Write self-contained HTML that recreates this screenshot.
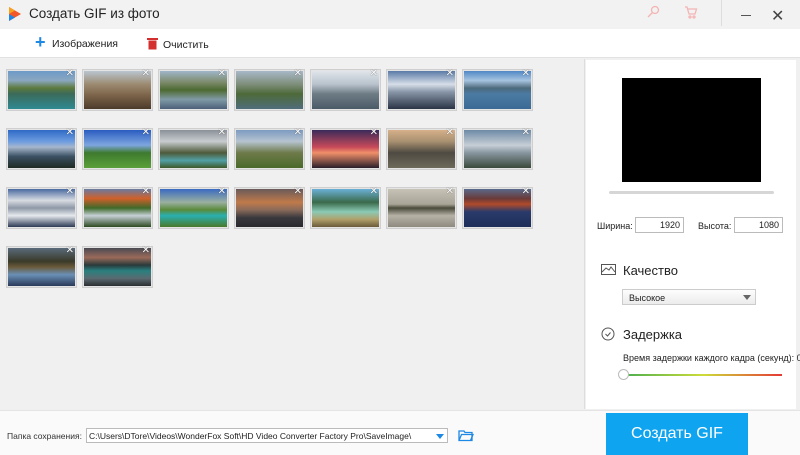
<!DOCTYPE html>
<html><head><meta charset="utf-8"><style>
*{box-sizing:border-box;margin:0;padding:0}
body{width:800px;height:455px;overflow:hidden;background:#f0f0f0;font-family:"Liberation Sans",sans-serif;position:relative;color:#222}
.a{position:absolute}
.t{position:absolute;width:71px;height:42px;border:1px solid #cfcfcf;padding:1px;background:#e4e4e4}
.t div{width:100%;height:100%}
.t span{position:absolute;right:2px;top:-2px;font-size:10px;color:#fff;text-shadow:0 0 1px #333}
</style></head><body>
<div class="a" style="left:0;top:0;width:800px;height:29px;background:#f2f2f2"></div>
<svg class="a" style="left:7px;top:6px" width="16" height="16" viewBox="0 0 16 16"><path d="M2 1L14 8L2 15Z" fill="#f2582a"/><path d="M2 1L8 4.5L2 8Z" fill="#f7a21c"/><path d="M2 8L8 11.5L2 15Z" fill="#1e88e5"/></svg>
<div class="a" style="left:29px;top:6px;font-size:13.5px;color:#222">Создать GIF из фото</div>
<svg class="a" style="left:646px;top:5px" width="14" height="14" viewBox="0 0 14 14" fill="none" stroke="#f4b4b4" stroke-width="1.3"><circle cx="9" cy="5" r="3.5"/><path d="M6.5 7.5L2 12"/></svg>
<svg class="a" style="left:684px;top:5px" width="14" height="14" viewBox="0 0 14 14" fill="none" stroke="#f4b4b4" stroke-width="1.3"><path d="M1 2h2l2 7h6l1.5-5H4"/><circle cx="6" cy="12" r="1"/><circle cx="10" cy="12" r="1"/></svg>
<div class="a" style="left:721px;top:0;width:1px;height:26px;background:#ddd"></div>
<div class="a" style="left:741px;top:15px;width:10px;height:1px;background:#555"></div>
<div class="a" style="left:771px;top:6px;font-size:16px;color:#444">✕</div>
<div class="a" style="left:0;top:29px;width:800px;height:29px;background:#fff;border-bottom:1px solid #e2e2e2"></div>
<div class="a" style="left:35px;top:32px;font-size:18px;color:#1e88e5;font-weight:bold">+</div>
<div class="a" style="left:52px;top:38px;font-size:10.5px">Изображения</div>
<svg class="a" style="left:147px;top:37px" width="11" height="13" viewBox="0 0 11 13"><rect x="0" y="1" width="11" height="2" fill="#d32f2f"/><rect x="1.5" y="3.5" width="8" height="9" fill="#d32f2f"/></svg>
<div class="a" style="left:163px;top:39px;font-size:10.5px">Очистить</div>
<div class="a" style="left:584px;top:59px;width:1px;height:350px;background:#ddd"></div>
<div class="a" style="left:586px;top:60px;width:210px;height:349px;background:#fff"></div>
<div class="a" style="left:622px;top:78px;width:139px;height:104px;background:#000"></div>
<div class="a" style="left:609px;top:191px;width:165px;height:3px;background:#d6d6d6;border-radius:2px"></div>
<div class="a" style="left:597px;top:221px;font-size:9px;white-space:nowrap">Ширина:</div>
<div class="a" style="left:635px;top:217px;width:49px;height:16px;border:1px solid #bbb;font-size:9px;text-align:right;padding:2px 3px">1920</div>
<div class="a" style="left:698px;top:221px;font-size:9px;white-space:nowrap">Высота:</div>
<div class="a" style="left:734px;top:217px;width:49px;height:16px;border:1px solid #bbb;font-size:9px;text-align:right;padding:2px 3px">1080</div>
<svg class="a" style="left:601px;top:264px" width="15" height="11" viewBox="0 0 15 11" fill="none" stroke="#555"><rect x="0.5" y="0.5" width="14" height="10"/><path d="M1 8L5 4L8 6L10 3L14 8"/></svg>
<div class="a" style="left:623px;top:263px;font-size:13px">Качество</div>
<div class="a" style="left:622px;top:289px;width:134px;height:16px;border:1px solid #ccc;background:linear-gradient(#fdfdfd,#ececec);font-size:9px;padding:3px 6px">Высокое</div>
<div class="a" style="left:743px;top:295px;border:4px solid transparent;border-top:5px solid #666"></div>
<svg class="a" style="left:601px;top:327px" width="14" height="14" viewBox="0 0 14 14" fill="none" stroke="#555"><circle cx="7" cy="7" r="6"/><path d="M4.5 7L6.5 9L9.5 5.5"/></svg>
<div class="a" style="left:623px;top:327px;font-size:13px">Задержка</div>
<div class="a" style="left:623px;top:353px;font-size:9px;white-space:nowrap">Время задержки каждого кадра (секунд): 0,0</div>
<div class="a" style="left:625px;top:374px;width:157px;height:2px;background:linear-gradient(90deg,#4caf50,#cddc39,#e53935)"></div>
<div class="a" style="left:618px;top:369px;width:11px;height:11px;border:1px solid #bbb;border-radius:50%;background:#fff"></div>
<div class="a" style="left:0;top:410px;width:800px;height:45px;background:#fafafa;border-top:1px solid #e4e4e4"></div>
<div class="a" style="left:7px;top:431px;font-size:8.5px;color:#333;white-space:nowrap">Папка сохранения:</div>
<div class="a" style="left:86px;top:428px;width:362px;height:15px;border:1px solid #bbb;background:#fff;font-size:8.5px;padding:2px 2px;white-space:nowrap;overflow:hidden">C:\Users\DTore\Videos\WonderFox Soft\HD Video Converter Factory Pro\SaveImage\</div>
<div class="a" style="left:436px;top:434px;border:4px solid transparent;border-top:5px solid #1e88e5"></div>
<svg class="a" style="left:458px;top:429px" width="16" height="13" viewBox="0 0 16 13" fill="none" stroke="#1e88e5" stroke-width="1.3"><path d="M1 2h5l1 1.5h7v8H1z"/><path d="M1 11.5L3.5 5.5H15L12.5 11.5"/></svg>
<div class="a" style="left:606px;top:413px;width:142px;height:42px;background:#0fa4f0;color:#fff;font-size:16px;text-align:center;line-height:42px">Создать GIF</div>
<div id="g"></div>
<script>
var G=[
"linear-gradient(#6e9ac8 0,#8aa7c0 25%,#5d7a3c 45%,#3b6a5a 60%,#2f8a92 100%)",
"linear-gradient(#b9c5d0 0,#9c8a70 35%,#7a6248 65%,#4c3a2a 100%)",
"linear-gradient(#9fb6c9 0,#7c8a6a 30%,#4d6a32 50%,#809aa6 75%,#4c6078 100%)",
"linear-gradient(#a8b8c8 0,#7e8e7a 35%,#4e6a3a 60%,#4f6d7a 100%)",
"linear-gradient(#dfe5ea 0,#b8c2cc 35%,#6e7c86 60%,#4a5a66 100%)",
"linear-gradient(#5a7aa6 0,#d6dee8 35%,#8896a8 55%,#2a3446 100%)",
"linear-gradient(#4f88c6 0,#a7c4e0 25%,#4d6a7c 45%,#4b7aa2 60%,#3c6a96 100%)",
"linear-gradient(#2f6ac6 0,#6c9ce0 30%,#a6b6cc 45%,#3a5062 70%,#1e2a22 100%)",
"linear-gradient(#2a5cc0 0,#7ea6e0 40%,#3e7a2e 60%,#5aa03a 100%)",
"linear-gradient(#8a9098 0,#c8ccd0 30%,#4e5a3a 60%,#52a0a6 80%,#3e5a2a 100%)",
"linear-gradient(#7c9ac0 0,#b6c4d0 30%,#6e7a4a 60%,#4a6a2a 100%)",
"linear-gradient(#3a2a5a 0,#c84a5a 45%,#f0906a 60%,#2a1e2a 100%)",
"linear-gradient(#d6b08a 0,#a89070 30%,#4e4a42 60%,#6e6a5a 100%)",
"linear-gradient(#6e8aa6 0,#c6ced6 40%,#8896a0 60%,#3a4a3a 100%)",
"linear-gradient(#4a6aa0 0,#d8dce2 30%,#8e98a6 50%,#e6eaee 70%,#2e3a56 100%)",
"linear-gradient(#6a7aa0 0,#d0602a 25%,#3e6a2a 50%,#c6d0d6 70%,#2e4a22 100%)",
"linear-gradient(#3a6ac0 0,#9ab0a0 35%,#5a8a3a 55%,#2ab0b0 70%,#4a7a2a 100%)",
"linear-gradient(#6a5a5a 0,#c07a4a 35%,#8a6a5a 55%,#3a3a3e 75%,#2a2a2e 100%)",
"linear-gradient(#6ab0d6 0,#3a6a4a 35%,#8acab6 60%,#b0a06a 80%,#6a5a3a 100%)",
"linear-gradient(#c6c2b6 0,#a8a496 40%,#4a4a3a 50%,#b6b2a6 70%,#8e8a80 100%)",
"linear-gradient(#5a6a8a 0,#6a3a3a 25%,#b04a2a 40%,#2a3a6a 60%,#1e2e5a 100%)",
"linear-gradient(#5a6a7a 0,#3a3a2a 35%,#6a5a3a 50%,#6a90b6 70%,#2a3a5a 100%)",
"linear-gradient(#4a4a52 0,#9a6a5a 25%,#2a3a3a 45%,#2a8080 60%,#5a6a70 80%,#2a2e32 100%)"];
var h="";G.forEach(function(g,i){var c=i%7,r=Math.floor(i/7);h+='<div class="t" style="left:'+(6+76*c)+'px;top:'+(69+59*r)+'px"><div style="background:'+g+'"></div><span>✕</span></div>';});
document.getElementById("g").innerHTML=h;
</script>
</body></html>
